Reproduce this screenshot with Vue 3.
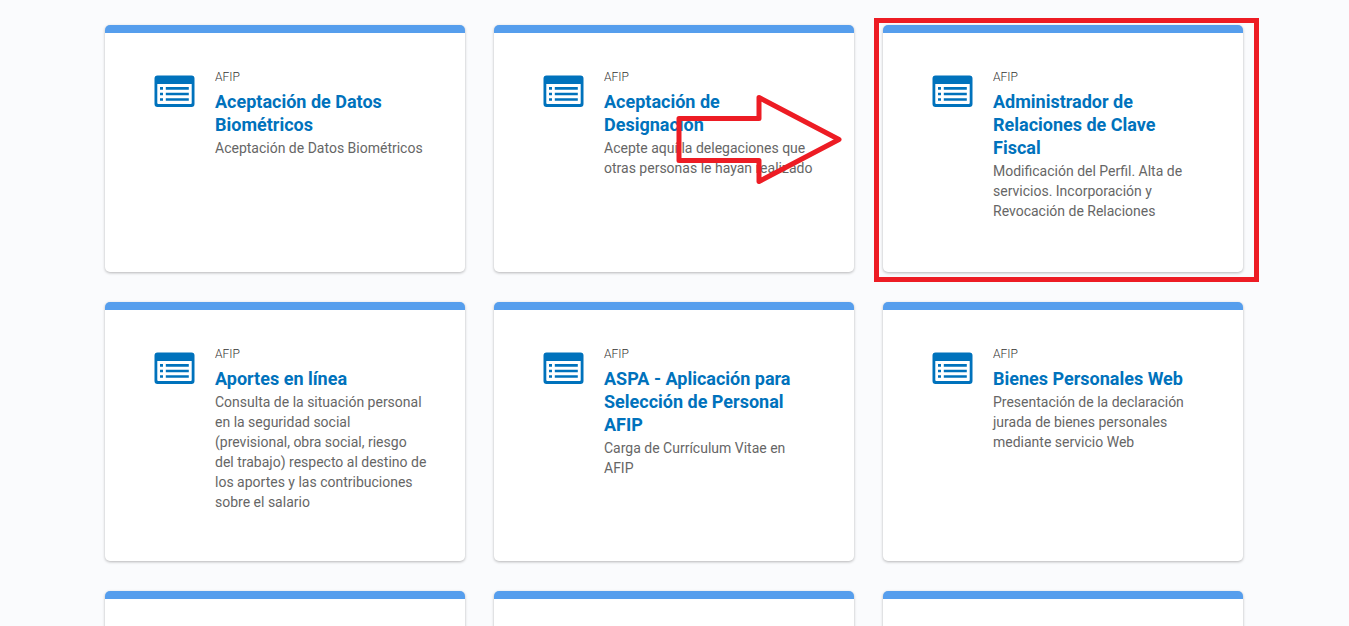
<script setup>
const services = [
  { title: 'Aceptación de Datos Biométricos', text: 'Aceptación de Datos Biométricos' },
  {
    title: 'Aceptación de Designación',
    text: 'Acepte aquí la delegaciones que otras personas le hayan realizado',
    arrow: true,
  },
  {
    title: 'Administrador de Relaciones de Clave Fiscal',
    text: 'Modificación del Perfil. Alta de servicios. Incorporación y Revocación de Relaciones',
    marked: true,
  },
  {
    title: 'Aportes en línea',
    text: 'Consulta de la situación personal en la seguridad social (previsional, obra social, riesgo del trabajo) respecto al destino de los aportes y las contribuciones sobre el salario',
  },
  { title: 'ASPA - Aplicación para Selección de Personal AFIP', text: 'Carga de Currículum Vitae en AFIP' },
  {
    title: 'Bienes Personales Web',
    text: 'Presentación de la declaración jurada de bienes personales mediante servicio Web',
  },
]
</script>

<template>
  <main class="page">
    <div class="grid">
      <article v-for="s in services" :key="s.title" class="card">
        <a href="#" class="link">
          <svg class="icon" viewBox="0 0 41 32" aria-hidden="true">
            <path
              fill="#0072bc"
              fill-rule="evenodd"
              d="M3.500 .5H37.500Q40.500 .5 40.500 3.500V29Q40.500 32 37.500 32H3.500Q.5 32 .5 29V3.500Q.5 .5 3.500 .5ZM3.300 9V28Q3.300 29 4.300 29H36.700Q37.700 29 37.700 28V9Z"
            />
            <path
              fill="#0072bc"
              d="M6 12h3v2.700H6zM6 17.700h3v2.600H6zM6 23.200h3v2.600H6zM11.800 12h23v2.700h-23zM11.800 17.700h23v2.600h-23zM11.800 23.200h23v2.600h-23z"
            />
          </svg>
          <span class="body">
            <span class="org">AFIP</span>
            <span class="title">{{ s.title }}</span>
            <span class="text">{{ s.text }}</span>
          </span>
        </a>
        <svg v-if="s.arrow" class="arrow" viewBox="0 0 172 94" aria-hidden="true">
          <path
            d="M5 25.500H85V4.500L165 46.500L85 88.500V67.500H5Z"
            fill="none"
            stroke="#ed1c24"
            stroke-width="5"
            stroke-linejoin="round"
          />
        </svg>
        <div v-if="s.marked" class="mark"></div>
      </article>
      <div v-for="n in 3" :key="n" class="card"></div>
    </div>
  </main>
</template>

<style>
body {
  margin: 0;
  background: #fafbfd;
}
</style>

<style scoped>
.page {
  box-sizing: border-box;
  height: 100vh;
  overflow: hidden;
  padding: 25px 106px 0 105px;
  font-family: Roboto, "Liberation Sans", sans-serif;
}
.grid {
  display: grid;
  grid-template-columns: repeat(3, minmax(0, 1fr));
  gap: 30px 29px;
}
.card {
  position: relative;
  box-sizing: border-box;
  min-height: 247px;
  background: #fff;
  border-top: 8px solid #569eed;
  border-radius: 5px;
  box-shadow: 0 1px 3px rgba(0, 0, 0, 0.28);
}
.link {
  display: flex;
  align-items: flex-start;
  gap: 20px;
  padding: 36px 37px 49px 49px;
  color: inherit;
  text-decoration: none;
}
.icon {
  flex: none;
  width: 41px;
  height: 32px;
  margin-top: 6px;
}
.body {
  display: flex;
  flex: 1;
  flex-direction: column;
  min-width: 0;
}
.org {
  margin-bottom: 5px;
  font-size: 12px;
  font-weight: 300;
  line-height: 16px;
  color: #333;
}
.title {
  margin-bottom: 2px;
  font-size: 18px;
  font-weight: 700;
  line-height: 23px;
  color: #0072bc;
}
.text {
  font-size: 14px;
  line-height: 20px;
  color: #666;
}
.arrow {
  position: absolute;
  top: 60px;
  left: 180px;
  width: 172px;
  height: 94px;
}
.mark {
  position: absolute;
  top: -15px;
  right: -16px;
  bottom: -10px;
  left: -9px;
  border: 5px solid #ed1c24;
}
</style>
